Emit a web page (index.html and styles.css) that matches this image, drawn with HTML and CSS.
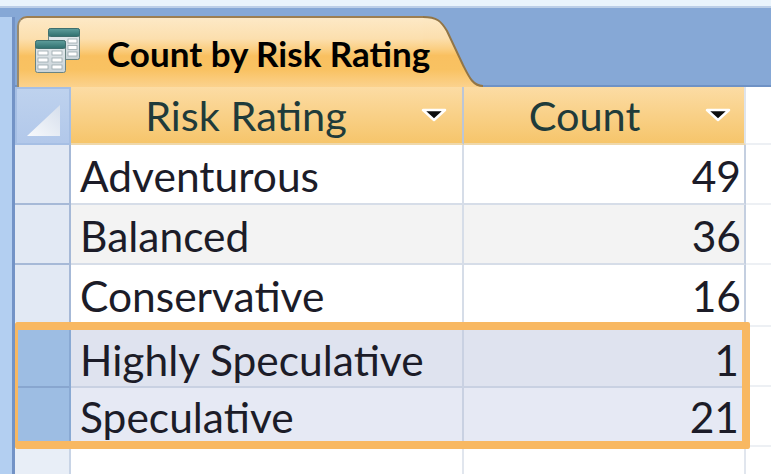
FILE: index.html
```html
<!DOCTYPE html>
<html>
<head>
<meta charset="utf-8">
<link rel="stylesheet" href="styles.css">
</head>
<body>
<div class="app">
  <div class="topline"></div>
  <div class="content">
    <div class="leftframe"></div>
    <div class="pane">
      <div class="tabbar">
        <div class="tab">
          <svg class="tab-icon" viewBox="0 0 46 45">
            <defs>
              <linearGradient id="teal" x1="0" y1="0" x2="0" y2="1">
                <stop offset="0" stop-color="#5f9e9c"/>
                <stop offset="1" stop-color="#2f6f6e"/>
              </linearGradient>
              <linearGradient id="tbody" x1="0" y1="0" x2="0" y2="1">
                <stop offset="0" stop-color="#e9eef0"/>
                <stop offset="1" stop-color="#c9d3d8"/>
              </linearGradient>
            </defs>
            <rect x="14.5" y="0.5" width="31" height="31" rx="2" fill="url(#tbody)" stroke="#6a8483"/>
            <rect x="14.5" y="0.5" width="31" height="8" rx="2" fill="url(#teal)" stroke="#3f6f6e"/>
            <rect x="34" y="11" width="9" height="4" fill="#fff" stroke="#9aa8ad" stroke-width="0.8"/>
            <rect x="34" y="17.5" width="9" height="4" fill="#fff" stroke="#9aa8ad" stroke-width="0.8"/>
            <rect x="34" y="24" width="9" height="4" fill="#fff" stroke="#9aa8ad" stroke-width="0.8"/>
            <rect x="1.5" y="12.5" width="30" height="32" rx="2" fill="url(#tbody)" stroke="#6a8483"/>
            <rect x="1.5" y="12.5" width="30" height="8" rx="2" fill="url(#teal)" stroke="#3f6f6e"/>
            <rect x="4" y="23" width="10" height="4" fill="#fff" stroke="#9aa8ad" stroke-width="0.8"/>
            <rect x="18" y="23" width="10" height="4" fill="#fff" stroke="#9aa8ad" stroke-width="0.8"/>
            <rect x="4" y="30" width="10" height="4" fill="#fff" stroke="#9aa8ad" stroke-width="0.8"/>
            <rect x="18" y="30" width="10" height="4" fill="#fff" stroke="#9aa8ad" stroke-width="0.8"/>
            <rect x="4" y="37" width="10" height="4" fill="#fff" stroke="#9aa8ad" stroke-width="0.8"/>
            <rect x="18" y="37" width="10" height="4" fill="#fff" stroke="#9aa8ad" stroke-width="0.8"/>
          </svg>
          <span class="tab-title">Count by Risk Rating</span>
        </div>
        <svg class="tab-curve" viewBox="0 0 60 71" preserveAspectRatio="none">
          <defs>
            <linearGradient id="tabgrad" x1="0" y1="0" x2="0" y2="1">
              <stop offset="0" stop-color="#fde9c6"/>
              <stop offset="0.3" stop-color="#fcdfae"/>
              <stop offset="0.45" stop-color="#fbcf83"/>
              <stop offset="0.55" stop-color="#f9c060"/>
              <stop offset="0.75" stop-color="#f9c262"/>
              <stop offset="1" stop-color="#fbd28e"/>
            </linearGradient>
          </defs>
          <path d="M0,1 C14,1 18,5 24,15 L40,49 C46,61 50,70 60,70 L60,71 L0,71 Z" fill="url(#tabgrad)"/>
          <path d="M0,1 C14,1 18,5 24,15 L40,49 C46,61 50,70 60,70" fill="none" stroke="#927546" stroke-width="2"/>
        </svg>
      </div>
      <div class="sheet">
        <div class="hrow">
          <div class="corner">
            <svg class="corner-tri" viewBox="0 0 33 31">
              <defs>
                <linearGradient id="tri" x1="0" y1="1" x2="1" y2="0">
                  <stop offset="0" stop-color="#f7f9fc"/>
                  <stop offset="1" stop-color="#d6dfec"/>
                </linearGradient>
              </defs>
              <polygon points="0,31 33,0 33,31" fill="url(#tri)"/>
            </svg>
          </div>
          <div class="hcell h1">
            <span class="hlabel">Risk Rating</span>
            <svg class="arrow" viewBox="0 0 26 14"><polygon points="2,2 24,2 13,12" fill="#0d0d0d" stroke="#ffffff" stroke-width="2.5" stroke-linejoin="round"/></svg>
          </div>
          <div class="hcell h2">
            <span class="hlabel">Count</span>
            <svg class="arrow" viewBox="0 0 26 14"><polygon points="2,2 24,2 13,12" fill="#0d0d0d" stroke="#ffffff" stroke-width="2.5" stroke-linejoin="round"/></svg>
          </div>
          <div class="hrest"></div>
        </div>

        <div class="row">
          <div class="sel"></div>
          <div class="cell c1">Adventurous</div>
          <div class="cell c2">49</div>
          <div class="rest"></div>
        </div>
        <div class="row alt">
          <div class="sel"></div>
          <div class="cell c1">Balanced</div>
          <div class="cell c2">36</div>
          <div class="rest"></div>
        </div>
        <div class="row short">
          <div class="sel"></div>
          <div class="cell c1">Conservative</div>
          <div class="cell c2">16</div>
          <div class="rest"></div>
        </div>

        <div class="selgroup">
          <div class="selbox">
            <div class="row srow1">
              <div class="sel"></div>
              <div class="cell c1">Highly Speculative</div>
              <div class="cell c2">1</div>
            </div>
            <div class="row srow2">
              <div class="sel"></div>
              <div class="cell c1">Speculative</div>
              <div class="cell c2">21</div>
            </div>
          </div>
          <div class="selrest">
            <div class="rl1"></div>
            <div class="rl2"></div>
            <div class="rl3"></div>
          </div>
        </div>

        <div class="row newrow">
          <div class="sel"></div>
          <div class="cell c1"></div>
          <div class="cell c2"></div>
          <div class="rest"></div>
        </div>
      </div>
    </div>
  </div>
</div>
</body>
</html>
```

FILE: styles.css
```css
html, body {
  margin: 0;
  padding: 0;
}
body {
  width: 771px;
  height: 474px;
  overflow: hidden;
  background: #ffffff;
  font-family: "Lato", "Liberation Sans", sans-serif;
}
.app {
  display: flex;
  flex-direction: column;
  height: 474px;
}
.topline {
  flex: none;
  height: 6px;
  background: #eaf4fc;
  border-bottom: 2px solid #bccfe8;
}
.content {
  flex: 1;
  display: flex;
  min-height: 0;
  background: #86a8d6;
}
.leftframe {
  flex: none;
  width: 12px;
  margin-top: 9px;
  background: #b3cff1;
  border-right: 3px solid #7393c6;
}
.pane {
  flex: 1;
  min-width: 0;
  display: flex;
  flex-direction: column;
}
.tabbar {
  flex: none;
  height: 79px;
  display: flex;
  align-items: flex-end;
  padding-left: 2px;
  background: linear-gradient(to bottom, #86a8d6 0, #86a8d6 77px, #6f92c5 77px);
}
.tab {
  flex: none;
  box-sizing: border-box;
  width: 406px;
  height: 71px;
  display: flex;
  align-items: center;
  padding-left: 15px;
  border-top: 2px solid #9d7e50;
  border-left: 2px solid #9a8a6c;
  border-top-left-radius: 10px;
  background: linear-gradient(to bottom, #fde9c6 0%, #fcdfae 30%, #fbcf83 45%, #f9c060 55%, #f9c262 75%, #fbd28e 100%);
}
.tab-icon {
  flex: none;
  width: 46px;
  height: 45px;
  margin-right: 27px;
  margin-bottom: 4px;
}
.tab-title {
  position: relative;
  z-index: 1;
  font-weight: 700;
  font-size: 35px;
  color: #000000;
  white-space: nowrap;
}
.tab-curve {
  flex: none;
  display: block;
  width: 60px;
  height: 71px;
}
.sheet {
  flex: 1;
  min-height: 0;
  overflow: hidden;
  background: #ffffff;
  display: flex;
  flex-direction: column;
}
.hrow {
  flex: none;
  display: flex;
  height: 58px;
}
.corner {
  flex: none;
  box-sizing: border-box;
  width: 56px;
  border: 2px solid #a6bfe4;
  background: linear-gradient(to bottom, #bed2ee, #b2c8ea);
  display: flex;
  justify-content: flex-end;
  align-items: flex-end;
  padding: 0 9px 7px 0;
}
.corner-tri {
  width: 33px;
  height: 31px;
  display: block;
}
.hcell {
  flex: none;
  box-sizing: border-box;
  display: flex;
  align-items: center;
  background: linear-gradient(to bottom, #fcdca4, #f6c56b);
  border-right: 2px solid #bcc6d6;
  border-bottom: 2px solid #efd8ab;
  color: #1f3b3a;
  font-size: 41.5px;
}
.h1 {
  width: 393px;
  padding-right: 15px;
}
.h2 {
  width: 282px;
  padding-right: 13px;
  border-right-color: #dfe4eb;
}
.hlabel {
  flex: 1;
  text-align: center;
  white-space: nowrap;
}
.arrow {
  flex: none;
  display: block;
  width: 26px;
  height: 14px;
}
.hrest {
  flex: 1;
  border-bottom: 2px solid #edf0f4;
}
.row {
  flex: none;
  display: flex;
  height: 60px;
}
.sel {
  flex: none;
  box-sizing: border-box;
  width: 56px;
  background: #e2e9f4;
  border-right: 2px solid #a6b9d7;
  border-bottom: 2px solid #a6b9d7;
}
.cell {
  flex: none;
  box-sizing: border-box;
  display: flex;
  align-items: center;
  padding-top: 3px;
  font-size: 42.5px;
  color: #1c1c28;
  white-space: nowrap;
  background: #ffffff;
  border-right: 2px solid #d6dde8;
  border-bottom: 2px solid #d6dde8;
}
.c1 {
  width: 393px;
  padding-left: 9px;
}
.c2 {
  width: 282px;
  justify-content: flex-end;
  padding-right: 3px;
  border-right-color: #c4cfe0;
}
.rest {
  flex: 1;
  border-bottom: 2px solid #edf0f4;
}
.alt .cell {
  background: #f3f3f3;
}
.short {
  height: 57px;
}
.short > * {
  border-bottom: none;
}
.selgroup {
  flex: none;
  display: flex;
}
.selbox {
  flex: none;
  display: flex;
  flex-direction: column;
  border: 8px solid #f8b862;
  border-left-width: 3px;
  border-radius: 2px;
}
.selbox .sel {
  width: 53px;
  background: #9dbde3;
  border-right-color: #89a9d3;
  border-bottom-color: #88a6cf;
}
.selbox .cell {
  background: #dfe3ef;
  border-right-color: #c9d1e2;
  border-bottom-color: #c9d1e2;
}
.selbox .c2 {
  width: 278px;
  border-right: none;
}
.srow1 {
  height: 58px;
}
.srow2 {
  height: 53px;
}
.srow2 > * {
  border-bottom: none;
}
.srow2 .cell {
  background: #e6e9f4;
}
.selrest {
  flex: 1;
  display: flex;
  flex-direction: column;
}
.selrest > div {
  box-sizing: border-box;
  border-bottom: 2px solid #edf0f4;
}
.rl1 {
  height: 5px;
}
.rl2 {
  height: 60px;
}
.rl3 {
  height: 60px;
}
.newrow {
  height: 40px;
}
.newrow > * {
  border-bottom: none;
}
.newrow .sel {
  background: #e8eef7;
  border-right-color: #c8d4e6;
}
.newrow .cell {
  border-right-color: #e1e6ee;
}
```
